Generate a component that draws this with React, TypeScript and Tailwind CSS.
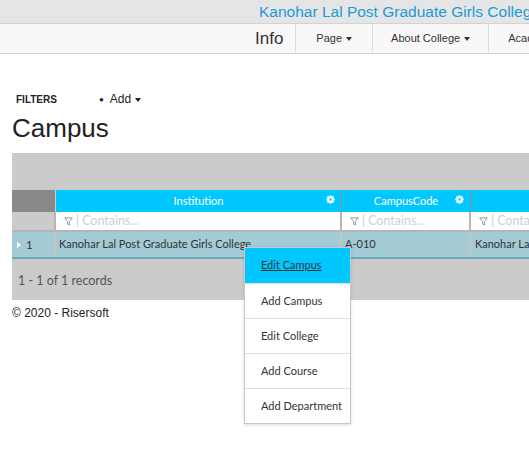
import { type ReactNode } from 'react';

const gridFont = { fontFamily: 'Lato, "Noto Sans", sans-serif' };

function Caret() {
    return <span className="ml-[4px] inline-block border-x-[3.5px] border-t-[4px] border-x-transparent border-t-current align-middle" />;
}

function Gear() {
    const teeth = [0, 45, 90, 135, 180, 225, 270, 315];
    return (
        <svg width="9" height="9" viewBox="0 0 10 10" className="shrink-0">
            {teeth.map((a) => (
                <rect key={a} x="4" y="0.3" width="2" height="2.4" fill="white" transform={`rotate(${a} 5 5)`} />
            ))}
            <circle cx="5" cy="5" r="3.2" fill="white" />
            <circle cx="5" cy="5" r="1.3" fill="#00c8ff" />
        </svg>
    );
}

function Funnel() {
    return (
        <svg width="9" height="9" viewBox="0 0 10 10" className="shrink-0">
            <path d="M0.8 1h8.4L6 5v3.8L4 7.8V5z" fill="none" stroke="#8a8a8a" strokeWidth="1" />
        </svg>
    );
}

function HeaderCell({ width, children }: { width: string; children?: ReactNode }) {
    return (
        <div className={`${width} relative flex h-full shrink-0 items-center justify-center border-r border-[#8f8f8f] bg-[#00c8ff] text-[11px] text-white`}>
            {children}
            <span className="absolute right-[6px] top-[5px]">
                <Gear />
            </span>
        </div>
    );
}

function FilterCell({ width }: { width: string }) {
    return (
        <div className={`${width} flex h-full shrink-0 items-center gap-[3px] border-r-2 border-[#b5b5b5] bg-white pl-[8px] text-[12.5px] text-[#cfcfcf]`}>
            <Funnel />
            <span>|</span>
            <span>Contains...</span>
        </div>
    );
}

const menuItems = ['Edit Campus', 'Add Campus', 'Edit College', 'Add Course', 'Add Department'];

export default function App() {
    return (
        <div className="relative h-[464px] w-[529px] overflow-hidden bg-white" style={{ fontFamily: '"Liberation Sans", Arial, sans-serif' }}>
            <div className="w-[900px]">
                <div className="h-[23px] whitespace-nowrap bg-[#e5e5e5] pl-[259px] text-[15.5px] leading-[24px] text-[#1b9ad8]">
                    Kanohar Lal Post Graduate Girls College
                </div>
                <nav className="flex h-[31px] items-stretch border-y border-[#d3d3d3] bg-[#f8f8f8] pl-[255px] text-[11px] text-[#333]">
                    <div className="flex items-center pr-[12px] text-[17px] font-light text-[#333]">Info</div>
                    <div className="flex items-center border-l border-[#ddd] px-[20px]">
                        Page
                        <Caret />
                    </div>
                    <div className="flex items-center border-l border-[#ddd] px-[18px]">
                        About College
                        <Caret />
                    </div>
                    <div className="flex items-center border-l border-[#ddd] px-[19px]">
                        Academics
                        <Caret />
                    </div>
                </nav>

                <div className="mt-[36px] flex items-center pl-[16px] text-[#222]">
                    <span className="text-[10px] font-bold">FILTERS</span>
                    <span className="ml-[42px] text-[12px]">
                        <span className="mr-[6px] align-middle text-[8px]">●</span>
                        Add
                        <Caret />
                    </span>
                </div>
                <h1 className="ml-[12px] mt-[5px] text-[26px] leading-[30px] text-[#222]">Campus</h1>

                <div className="ml-[12px] mt-[10px]" style={gridFont}>
                    <div className="h-[37px] bg-[#cbcbcb]" />
                    <div className="flex h-[22px]">
                        <div className="h-full w-[44px] shrink-0 border-r border-[#cfcfcf] bg-[#888]" />
                        <HeaderCell width="w-[286px]">Institution</HeaderCell>
                        <HeaderCell width="w-[129px]">CampusCode</HeaderCell>
                        <HeaderCell width="w-[300px]">Campus</HeaderCell>
                    </div>
                    <div className="flex h-[20px] border-b-2 border-[#b5b5b5]">
                        <div className="h-full w-[44px] shrink-0 border-r-2 border-[#b5b5b5] bg-[#cbcbcb]" />
                        <FilterCell width="w-[286px]" />
                        <FilterCell width="w-[129px]" />
                        <FilterCell width="w-[300px]" />
                    </div>
                    <div className="flex h-[27px] border-b-2 border-[#6fa9b8] bg-[#a2cbd6] text-[11px] text-[#333]">
                        <div className="flex h-full w-[44px] shrink-0 items-center border-r-2 border-[#c4c4c4] pl-[5px] text-[11.5px]">
                            <span className="mr-[5px] inline-block border-y-[3px] border-l-[4px] border-y-transparent border-l-white" />1
                        </div>
                        <div className="flex h-full w-[286px] shrink-0 items-center border-r-2 border-[#c4c4c4] pl-[3px]">
                            Kanohar Lal Post Graduate Girls College
                        </div>
                        <div className="flex h-full w-[129px] shrink-0 items-center border-r-2 border-[#c4c4c4] pl-[3px]">A-010</div>
                        <div className="flex h-full w-[300px] shrink-0 items-center pl-[4px]">Kanohar Lal Post Graduate Girls College</div>
                    </div>
                    <div className="flex h-[41px] items-center bg-[#cbcbcb] pl-[6px] pt-[3px] text-[12.5px] text-[#555]">1 - 1 of 1 records</div>
                </div>
                <div className="ml-[12px] mt-[4px] text-[12px] text-[#222]">© 2020 - Risersoft</div>
            </div>

            <div
                className="absolute left-[244px] top-[247px] w-[107px] border border-[#c8c8c8] bg-white text-[11px] text-[#333] shadow-[0_1px_3px_rgba(0,0,0,0.15)]"
                style={gridFont}
            >
                {menuItems.map((item, i) => (
                    <div
                        key={item}
                        className={`flex h-[35px] items-center pl-[16px] ${i > 0 ? 'border-t border-[#dedede]' : 'bg-[#00c8ff] underline'}`}
                    >
                        {item}
                    </div>
                ))}
            </div>
        </div>
    );
}
